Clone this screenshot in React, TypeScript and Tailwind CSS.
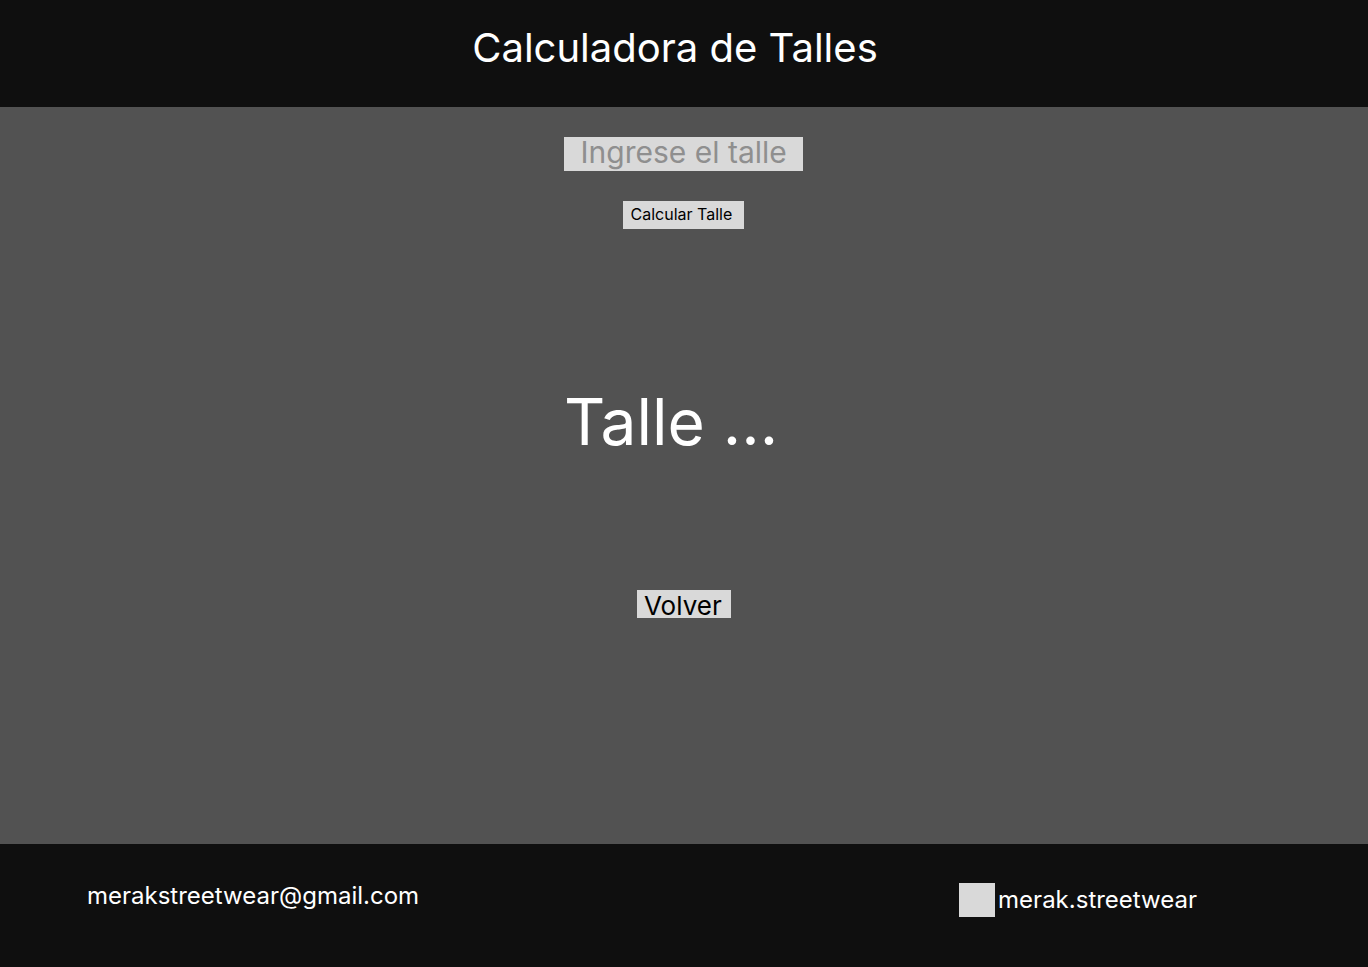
export default function App() {
  return (
    <div className="flex min-h-screen flex-col bg-[#525252] font-['Inter',sans-serif] text-white antialiased">
      <header className="flex justify-center bg-[#0f0f0f] pt-6 pr-[18px] pb-9">
        <h1 className="text-[40px] leading-[47px]">Calculadora de Talles</h1>
      </header>

      <main className="flex grow flex-col items-center pt-[30px]">
        <form className="flex flex-col items-center gap-[30px] pr-0.5" onSubmit={(event) => event.preventDefault()}>
          <input
            type="text"
            aria-label="Ingrese el talle"
            placeholder="Ingrese el talle"
            className="h-[34px] w-[239px] bg-[#d9d9d9] pb-1 pl-[17px] text-[30px] leading-[30px] text-black outline-none placeholder:text-[#8f8f8f]"
          />
          <button type="submit" className="h-7 w-[121px] bg-[#d9d9d9] pb-0.5 pl-2 text-left text-base leading-6 text-black">
            Calcular Talle
          </button>
        </form>
        <output className="mt-[153px] pr-[26px] text-[64px] leading-[80px]">Talle ...</output>
        <button type="button" className="mt-32 h-7 w-[94px] bg-[#d9d9d9] pt-1 pl-[7px] text-left text-[26px] leading-6 text-black">
          Volver
        </button>
      </main>

      <footer className="flex h-[123px] items-start justify-between bg-[#0f0f0f] pt-[37px] pr-[171px] pl-[87px] text-2xl leading-[30px]">
        <a href="mailto:merakstreetwear@gmail.com">merakstreetwear@gmail.com</a>
        <a href="#instagram" className="flex items-center gap-[3px] pt-0.5">
          <span className="h-[34px] w-9 bg-[#d9d9d9]" />
          merak.streetwear
        </a>
      </footer>
    </div>
  );
}
